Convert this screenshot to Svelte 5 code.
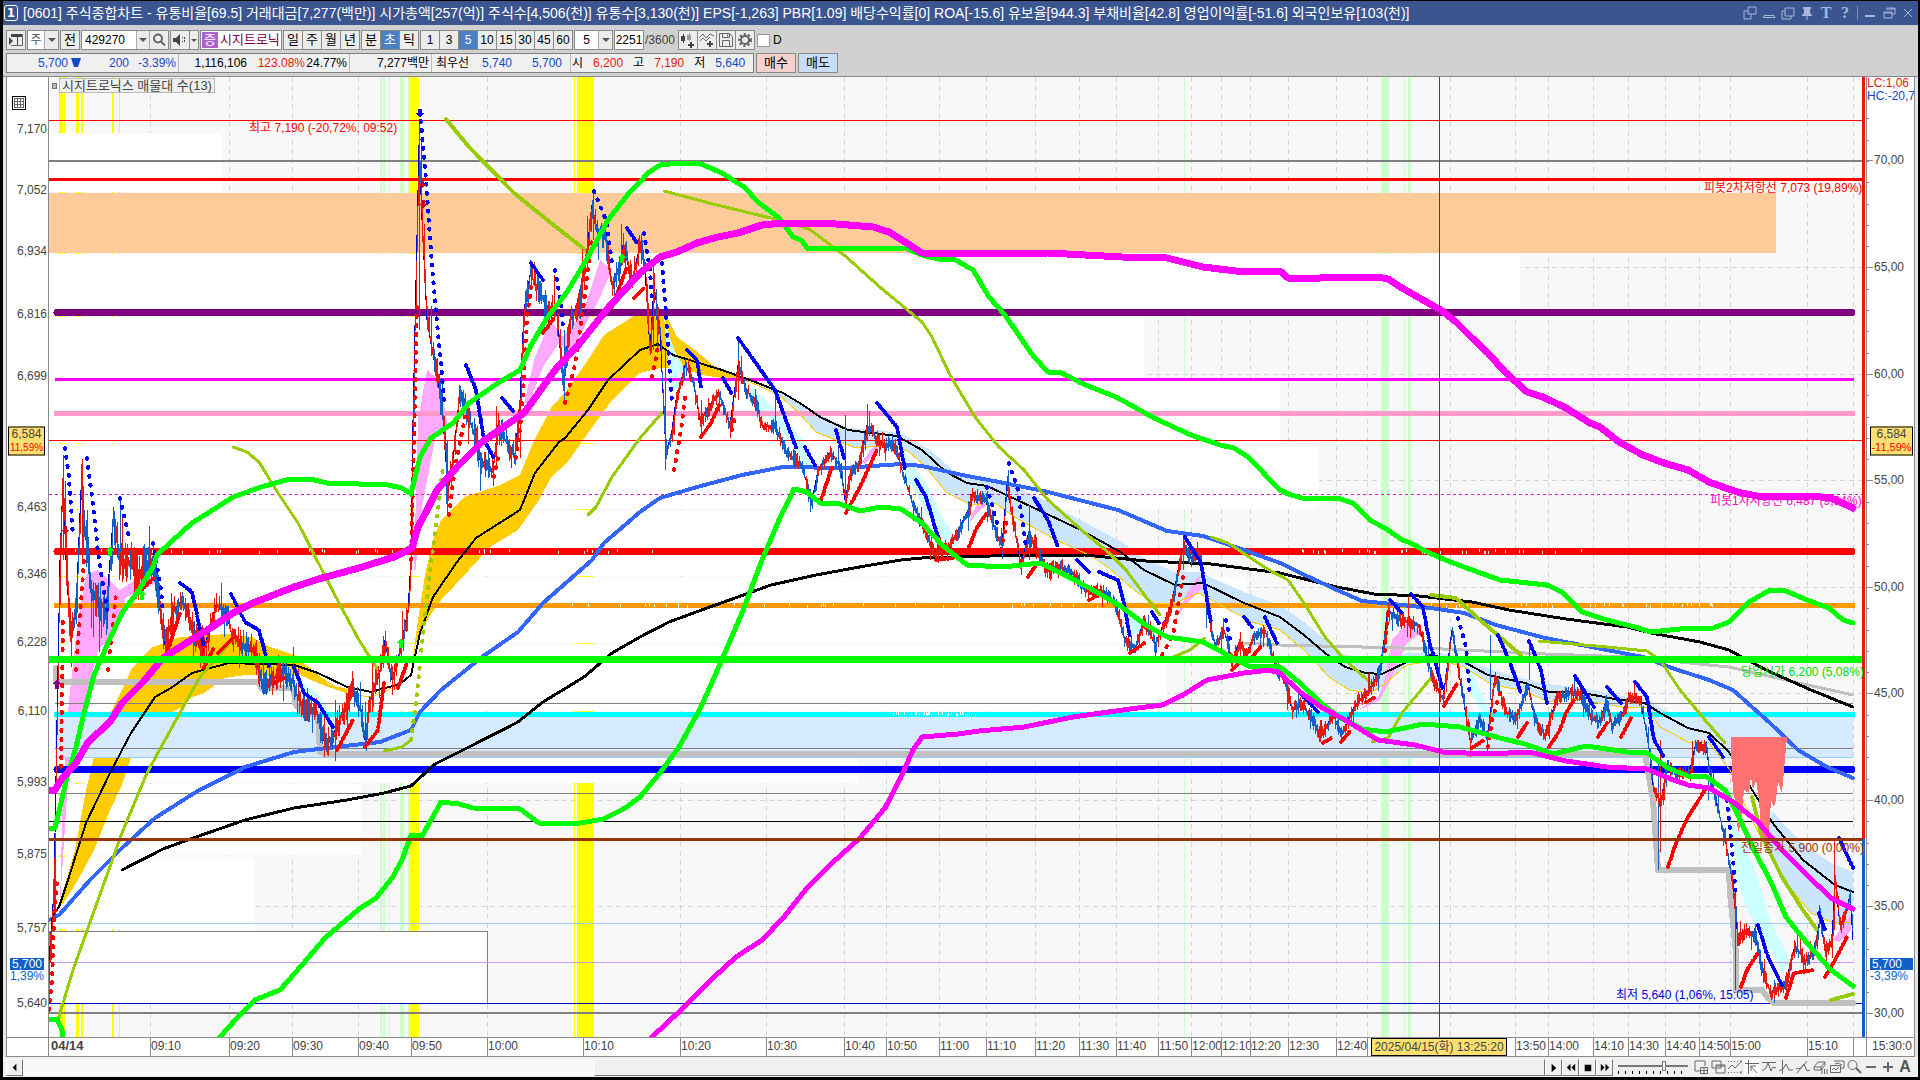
<script>
	// the plot area works in its own units, price grows upwards from 1037 to 77
	const LEFT = 49;
	const TOP = 77;
	const WIDTH = 1817;
	const HEIGHT = 960;

	const px = (x) => ((x - LEFT) / WIDTH) * 100;
	const py = (y) => ((y - TOP) / HEIGHT) * 100;

	const info = '[0601] 주식종합차트 - 유통비율[69.5] 거래대금[7,277(백만)] 시가총액[257(억)] 주식수[4,506(천)] 유통수[3,130(천)] EPS[-1,263] PBR[1.09] 배당수익률[0] ROA[-15.6] 유보율[944.3] 부채비율[42.8] 영업이익률[-51.6] 외국인보유[103(천)]';

	const periods = ['일', '주', '월', '년'];
	const units = ['분', '초', '틱'];
	const steps = ['1', '3', '5', '10', '15', '30', '45', '60'];

	const times = [
		[150, '09:10'], [229, '09:20'], [292, '09:30'], [358, '09:40'], [411, '09:50'], [487, '10:00'],
		[583, '10:10'], [680, '10:20'], [766, '10:30'], [844, '10:40'], [886, '10:50'], [939, '11:00'],
		[986, '11:10'], [1035, '11:20'], [1079, '11:30'], [1116, '11:40'], [1158, '11:50'], [1191, '12:00'],
		[1221, '12:10'], [1250, '12:20'], [1288, '12:30'], [1336, '12:40'], [1367, ''], [1409, ''],
		[1450, ''], [1515, '13:50'], [1548, '14:00'], [1593, '14:10'], [1628, '14:30'], [1665, '14:40'],
		[1699, '14:50'], [1730, '15:00'], [1807, '15:10'], [1853, '']
	];

	const prices = [
		[129, '7,170'], [190, '7,052'], [251, '6,934'], [314, '6,816'], [376, '6,699'], [507, '6,463'],
		[574, '6,346'], [642, '6,228'], [711, '6,110'], [782, '5,993'], [854, '5,875'], [928, '5,757'], [1003, '5,640']
	];

	const levels = [
		[160, '70,00'], [267, '65,00'], [374, '60,00'], [480, '55,00'], [587, '50,00'],
		[693, '45,00'], [800, '40,00'], [906, '35,00'], [1013, '30,00']
	];
	const minorTicks = Array.from({ length: 45 }, (_, i) => 97 + i * 21.3).filter((y) => y < 1034);

	// x, width, color
	const stripes = [
		[59, 4, '#ff0'], [64, 1, '#ff0'], [76, 3, '#ff0'], [81, 2, '#ff0'], [112, 2, '#ff0'], [119, 1, '#ff0'],
		[380, 2, '#cfc'], [383, 2, '#cfc'], [389, 1, '#cfc'], [400, 4, '#cfc'], [408, 2, '#cfc'],
		[410, 7, '#ff0'], [418, 1, '#ff0'], [574, 1, '#ff0'], [577, 4, '#ff0'], [582, 12, '#ff0'],
		[1184, 1, '#cfc'], [1381, 8, '#cfc'], [1404, 1, '#cfc'], [1408, 3, '#cfc']
	];

	// volume profile rows: top, bottom, right end
	const volumes = [
		[133, 192, 222], [254, 316, 1520], [317, 379, 1144], [380, 443, 1280], [444, 509, 1319],
		[510, 576, 1009], [577, 643, 1247], [644, 711, 1167], [712, 783, 858], [784, 855, 361], [857, 929, 255]
	];

	// y, thickness, color, x1, x2
	const hlines = [
		[120.5, 1, '#f00', 49, 1862], [161, 2, '#808080', 49, 1862], [179.5, 3, '#f00', 49, 1862],
		[312.5, 7, '#800080', 57, 1852, 'round'], [379.5, 3, '#f0f', 55, 1854], [413.5, 5, '#f9c', 54, 1855],
		[440.5, 1, '#f00', 49, 1862], [551.5, 7, '#f00', 57, 1852, 'round'], [605.5, 5, '#f90', 54, 1855],
		[703.5, 1, '#808080', 55, 1853], [714.5, 5, '#0ff', 54, 1855], [748.5, 1, '#808080', 55, 1853],
		[757.5, 1, '#9cf', 55, 1853], [769.5, 7, '#00f', 57, 1852, 'round'], [793.5, 1, '#808080', 49, 1853],
		[821.5, 1, '#000', 49, 1853], [923.5, 1, '#9cf', 49, 1853], [962.5, 1, '#c9f', 49, 1853],
		[1003.5, 1, '#00c', 49, 1862], [1013, 2, '#808080', 49, 1862]
	];

	const clouds = [
		['#fc0', '59,905 75,850 86,790 98,740 112,710 122,690 131,670 151,648 180,637 210,635 229,634 252,637 270,647 294,655 310,668 330,685 347,689 347,693 325,686 300,675 270,676 245,675 225,678 204,693 192,697 180,708 163,717 145,735 131,757 122,785 110,810 94,850 78,880 62,905'],
		['#fc0', '411,672 418,620 425,575 433,540 441,520 465,497 500,485 520,475 533,443 551,408 567,390 588,360 604,335 640,312 657,307 667,317 677,337 695,350 713,365 734,375 750,382 722,378 701,375 681,367 660,368 640,373 612,400 588,433 567,463 551,477 539,500 518,530 490,547 469,570 441,600 429,617 416,643 411,677'],
		['#cce5ff', '750,380 783,392 820,415 848,428 881,430 905,435 930,450 955,472 970,477 1010,485 1040,498 1080,520 1122,542 1146,560 1175,572 1199,572 1244,592 1280,605 1304,622 1329,643 1345,655 1366,657 1382,662 1407,653 1435,652 1460,657 1492,670 1541,683 1582,688 1627,697 1647,698 1660,708 1688,720 1725,727 1725,765 1709,743 1688,742 1660,727 1647,707 1627,708 1598,703 1570,698 1549,702 1521,690 1492,685 1464,667 1439,660 1407,665 1386,683 1370,693 1349,690 1329,677 1304,650 1280,630 1252,622 1224,607 1199,593 1175,603 1154,603 1134,590 1109,568 1089,555 1056,540 1016,518 995,503 971,505 946,492 926,467 909,452 893,445 856,448 836,440 816,432 799,413 779,395 754,383'],
		['#cce5ff', '1772,810 1786,827 1807,847 1831,863 1853,872 1853,922 1831,922 1811,913 1786,883 1766,847'],
		['#cff', '1731,817 1741,837 1756,873 1770,920 1790,960 1782,973 1766,943 1749,913 1737,883'],
		['#cff', '901,447 926,483 942,517 960,543 950,550 926,513 905,473'],
		['#cff', '664,317 673,347 685,370 681,390 671,387'],
		['#cff', '750,385 783,417 803,440 816,467 807,467 779,427 750,403'],
		['#cff', '294,667 305,684 320,696 333,718 327,722 312,700 298,690'],
		['#cff', '1124,590 1134,620 1150,625 1132,635 1121,606'],
		['#cff', '1466,655 1480,690 1490,712 1484,716 1470,690'],
		['#faf', '63,790 69,700 78,620 86,575 98,570 120,590 150,570 156,583 125,598 110,640 98,650 88,690 78,740 68,780 60,905'],
		['#faf', '414,570 418,420 427,370 439,380 449,430 437,430 429,470 418,530 416,570'],
		['#faf', '524,403 535,357 551,320 563,337 584,310 600,260 612,270 600,297 571,353 559,343 543,367 529,403'],
		['#faf', '862,462 872,448 880,440 874,455 864,464'],
		['#faf', '971,515 980,500 987,505 978,512 970,522'],
		['#faf', '1175,620 1187,593 1199,575 1203,587 1187,603'],
		['#faf', '1358,710 1378,697 1384,683 1392,640 1407,623 1423,632 1407,643 1394,673 1380,700 1366,707'],
		['#faf', '1833,940 1843,925 1851,915 1851,930 1840,942']
	];

	const salmon = '1731,737 1787,737 1784,770 1782,793 1778,782 1776,800 1774,807 1771,800 1768,850 1764,838 1761,833 1759,800 1756,780 1753,790 1751,776 1749,793 1744,790 1741,825 1738,832 1735,800 1733,793 1731,747';

	// color, thickness, points, dash
	const curves = [
		['#c0c0c0', 6, '56,668 56,682 259,682 261,688 294,688 295,703 302,713 318,715 320,752 325,754 1645,754 1653,800 1658,870 1729,870 1730,893 1736,953 1736,990 1762,990 1768,998 1774,1003 1853,1003'],
		['#c0c0c0', 3, '1244,643 1280,645 1443,649 1545,654 1631,657 1729,667 1790,681 1853,695'],
		['#fc0', 1, '294,657 318,676 347,694 371,697 400,685 411,674'],
		['#fc0', 1, '750,382 779,395 799,413 816,432 836,440 856,448 893,445 909,452 926,467 946,492 971,505 995,503 1016,518 1056,540 1089,555 1109,568 1134,590 1154,603 1175,603 1199,593 1224,607 1252,622 1280,630 1304,650 1329,677 1349,690 1370,693 1386,683 1407,665 1439,660 1464,667 1492,685 1521,690 1549,702 1570,698 1598,703 1627,708 1647,707 1660,727 1688,742 1709,743 1730,770 1748,812 1766,847 1786,883 1811,913 1831,922 1853,922'],
		['#000', 2, '53,915 59,907 69,877 86,823 110,773 131,733 155,697 171,688 192,673 229,663 294,665 318,673 347,687 371,692 400,684 411,675 420,633 433,597 457,562 476,538 520,510 535,473 559,442 565,438 588,410 608,380 640,350 658,344 673,355 722,370 750,380 783,393 803,405 820,417 848,430 897,436 922,450 946,472 967,483 987,486 1032,507 1081,530 1122,553 1144,570 1175,585 1203,583 1244,603 1280,617 1304,635 1325,653 1345,667 1366,673 1382,674 1407,662 1431,655 1464,662 1488,675 1525,683 1549,692 1578,692 1615,699 1645,703 1660,713 1688,728 1709,733 1729,752 1754,793 1774,825 1803,860 1835,885 1853,892'],
		['#000', 3, '122,870 163,849 196,837 245,820 294,808 347,800 384,793 411,786 435,764 469,747 518,722 543,702 584,677 612,653 640,637 669,622 707,608 738,597 771,585 816,575 865,566 901,560 922,558 991,556 1085,555 1146,561 1211,564 1280,573 1337,587 1374,594 1419,596 1472,602 1509,610 1566,619 1627,627 1651,633 1700,642 1729,650 1766,670 1811,690 1853,707'],
		['#36f', 4, '49,920 59,915 90,880 122,848 155,818 196,792 245,767 294,752 327,748 380,742 411,730 420,712 441,690 482,657 518,632 543,603 592,560 604,543 640,512 660,498 697,487 742,475 783,467 844,468 901,464 922,466 967,476 999,482 1048,492 1118,510 1167,531 1203,536 1244,550 1280,563 1309,577 1337,590 1362,601 1431,608 1464,613 1496,625 1545,638 1607,650 1643,657 1672,668 1709,680 1733,690 1770,723 1798,750 1827,767 1853,778'],
		['#9c0', 3, '57,1023 73,970 98,900 122,833 147,773 176,720 200,677 231,642'],
		['#9c0', 3, '233,447 247,452 259,462 278,493 298,523 322,570 339,603 359,640 378,670'],
		['#9c0', 3, '384,751 402,747 411,740'],
		['#9c0', 4, '411,740 416,703 422,643 429,580 437,517 443,467', '1 8'],
		['#9c0', 4, '446,119 469,147 514,193 551,223 588,252'],
		['#9c0', 3, '588,515 596,507 612,477 640,438 662,413'],
		['#9c0', 3, '664,191 713,204 779,220 809,229 844,255 881,288 922,322 932,337 950,375 975,417 999,447 1024,470 1048,500 1085,533 1109,553 1126,570 1146,597 1160,615'],
		['#9c0', 3, '1173,657 1190,650 1205,638'],
		['#9c0', 3, '1211,537 1228,543 1269,570 1288,580 1304,603 1325,637 1345,660 1372,684'],
		['#9c0', 3, '1372,742 1388,738 1402,713 1431,678'],
		['#9c0', 4, '1431,595 1456,598 1480,620 1521,655'],
		['#9c0', 3, '1539,641 1607,647 1647,651 1660,660 1680,690 1705,720 1725,743'],
		['#9c0', 4, '1752,797 1762,837 1782,877 1803,910 1817,930'],
		['#9c0', 4, '1831,1000 1853,994']
	];

	// bands are drawn over the price ticks
	const bands = [
		['#0f0', 5, '49,828 55,828 61,803 67,777 76,747 84,713 94,675 108,643 122,613 139,590 153,567 157,555 171,542 192,523 208,513 233,497 261,487 290,479 310,479 327,483 359,484 388,485 402,488 411,494 420,457 431,438 453,423 469,403 498,383 520,370 531,345 547,318 567,292 588,257 608,220 629,193 640,182 648,173 660,165 680,163 701,164 722,173 744,187 758,202 779,218 793,237 801,240 808,249 905,248 922,255 938,259 954,259 973,270 989,297 1005,315 1020,337 1034,357 1048,372 1062,373 1081,383 1118,398 1154,418 1191,435 1220,445 1234,448 1248,457 1280,490 1288,494 1302,498 1337,498 1353,503 1370,520 1388,530 1402,540 1411,543 1423,550 1443,559 1464,567 1500,580 1547,585 1562,592 1582,612 1607,620 1635,627 1651,632 1680,629 1713,628 1729,622 1749,602 1770,590 1786,591 1807,600 1829,608 1843,620 1853,623'],
		['#0f0', 5, '49,1020 57,1019 62,1030 62,1040'],
		['#0f0', 5, '220,1037 237,1018 255,1000 280,990 302,965 325,938 359,909 376,898 392,878 402,860 411,835 422,836 431,820 441,802 459,804 473,808 520,809 539,823 580,823 604,819 625,808 640,797 660,773 679,747 701,707 724,655 742,613 762,560 779,520 794,489 807,492 820,503 840,504 860,511 881,507 901,509 922,523 942,545 967,565 1003,567 1040,563 1065,575 1093,590 1122,607 1146,625 1167,637 1203,642 1224,653 1248,666 1280,667 1300,683 1321,703 1341,718 1362,729 1386,732 1423,724 1460,727 1500,738 1525,744 1553,754 1586,746 1627,752 1647,753 1668,768 1688,776 1707,777 1725,790 1737,813 1754,850 1770,880 1786,917 1807,943 1831,970 1853,986'],
		['#f0f', 5, '652,1037 681,1010 713,978 736,957 762,940 783,918 807,888 832,863 860,838 885,808 901,777 913,750 922,737 958,734 979,731 1024,727 1073,717 1130,709 1162,705 1183,695 1207,680 1244,673 1269,670 1280,673 1300,692 1321,707 1345,720 1378,740 1415,745 1443,752 1488,754 1529,752 1566,761 1607,767 1647,769 1668,778 1688,785 1709,788 1733,802 1758,822 1782,850 1807,875 1831,898 1853,909'],
		['#f0f', 7, '49,790 55,790 61,780 76,763 88,742 110,722 122,703 143,682 163,658 188,642 212,627 233,613 253,603 294,587 322,578 359,568 394,557 412,548 418,527 427,510 437,490 457,467 482,442 502,428 524,413 535,398 555,370 580,343 608,308 629,285 640,273 660,257 677,252 697,243 718,237 738,233 762,225 783,223 836,224 873,227 889,232 905,242 922,253 967,254 1048,253 1122,257 1167,258 1203,267 1236,271 1280,271 1288,278 1304,279 1337,277 1378,277 1388,279 1402,288 1423,300 1441,310 1456,322 1472,338 1488,353 1505,372 1527,392 1543,397 1566,408 1590,423 1600,427 1619,442 1643,455 1664,463 1688,470 1709,482 1737,492 1762,497 1811,496 1831,498 1853,508']
	];

	// parabolic dots
	const sarDown = [
		'65,448 69,477 73,537', '87,458 94,513 98,553 107,610', '120,498 129,537', '153,543 161,590 163,613',
		'180,583 192,592 204,647', '231,594 245,622 259,630 269,667', '294,667 304,693 318,703 333,727',
		'420,112 425,167 429,223 433,277 437,323 441,363 444,400', '466,365 476,390 484,440 494,458', '502,398 514,412',
		'531,263 543,280', '555,270 561,303 563,330', '594,191 606,220 612,263', '627,228 637,243', '644,233 650,270 652,303',
		'662,263 665,300 672,403', '687,350 697,360 701,387', '723,378 732,394', '738,338 775,390 797,450', '805,447 816,467', '836,430 844,458',
		'877,403 897,427 905,470', '916,480 926,497 938,537', '987,487 999,530', '1009,463 1018,490 1026,547',
		'1034,498 1048,520 1058,547', '1077,560 1089,572', '1099,572 1118,580 1124,603 1130,638', '1152,612 1160,625', '1185,537 1201,563 1211,623',
		'1226,620 1230,640', '1244,617 1252,627', '1265,617 1277,643', '1301,694 1318,712', '1390,600 1402,613', '1411,594 1423,607 1429,640 1443,690', '1458,618 1466,647 1470,697',
		'1498,635 1509,660 1521,693', '1529,641 1541,670 1547,703', '1575,676 1594,707', '1607,687 1621,703',
		'1635,682 1647,697 1654,740 1664,757', '1709,737 1723,757', '1727,800 1733,860 1736,897', '1758,925 1768,957 1782,985',
		'1819,913 1825,930', '1839,838 1853,868'
	];
	const sarUp = [
		'49,1010 52,980 54,920 57,880', '61,767 63,620', '76,670 84,560', '108,670 116,593', '141,590 155,577', '167,653 180,613', '204,668 214,647', '218,653 233,638',
		'273,684 284,678', '337,750 353,720', '365,747 378,730 384,683', '398,688 408,660', '411,560 414,440 417,300', '449,515 455,467 465,417',
		'494,477 498,457', '516,458 522,413 527,320 531,287', '543,333 555,317', '565,403 574,370 584,303 592,237',
		'612,307 627,267', '634,298 644,288', '652,377 658,347', '674,470 681,430 685,397', '701,437 711,423 720,403', '732,430 736,413',
		'820,503 832,467', '846,513 860,487 877,450', '936,560 954,558', '969,547 977,527 987,513', '1001,550 1007,520',
		'1028,577 1036,565', '1089,600 1103,593', '1130,653 1146,642', '1162,655 1173,635 1183,577', '1232,670 1240,662',
		'1252,657 1262,645', '1323,743 1333,737', '1341,742 1351,730', '1366,702 1376,697', '1384,660 1388,610', '1444,706 1458,682', '1472,748 1484,740',
		'1488,747 1492,720 1500,693', '1518,737 1527,723', '1549,747 1560,730 1566,713 1574,700', '1598,737 1607,723',
		'1621,737 1631,718', '1668,867 1676,843 1688,817 1705,790', '1741,987 1747,970 1758,953',
		'1786,998 1794,973 1815,970', '1825,977 1835,960 1847,937'
	];

	// the dots stand apart where the price moves fast
	function dotGap(points) {
		const list = points.split(' ').map((p) => p.split(',').map(Number));
		const [x1, y1] = list[0];
		const [x2, y2] = list[list.length - 1];
		return Math.abs((y2 - y1) / (x2 - x1)) > 3.5 ? '1 8' : '1 3';
	}

	const pricePath = '49,960 54,890 57,720 60,560 63,480 66,560 70,630 76,610 81,490 86,540 92,590 100,600 106,615 110,560 113,520 120,560 130,560 138,580 145,560 155,565 160,610 165,645 174,610 182,600 192,625 202,655 212,620 216,605 225,610 232,635 245,645 255,650 261,680 268,682 284,670 292,680 300,703 316,710 325,745 333,735 343,710 353,692 361,710 365,740 370,700 380,670 385,640 392,680 400,650 408,610 411,560 413,420 416,280 419,145 422,220 427,320 432,350 438,380 443,420 448,490 453,460 460,390 467,410 473,430 480,460 493,470 498,425 505,440 515,455 520,400 524,310 530,275 540,290 547,310 556,305 563,380 570,320 580,300 586,260 592,205 597,230 605,235 612,285 618,270 623,245 632,280 640,245 645,270 650,350 654,285 660,330 666,455 672,430 676,400 685,365 693,380 700,420 710,405 718,392 730,425 738,365 746,390 755,400 762,425 775,425 785,450 797,460 803,470 812,500 818,470 830,452 840,465 845,500 850,475 860,460 867,425 880,442 895,447 905,480 915,510 925,530 935,552 950,545 958,530 968,510 972,494 985,498 995,530 1002,545 1007,485 1013,520 1021,565 1028,535 1035,542 1045,570 1060,565 1075,575 1085,590 1100,590 1115,602 1125,640 1135,648 1144,620 1155,645 1165,620 1172,602 1180,560 1184,545 1192,560 1200,555 1207,610 1215,645 1224,630 1232,660 1240,640 1245,655 1255,635 1265,630 1275,665 1285,680 1292,710 1300,702 1310,715 1320,735 1333,715 1342,732 1355,705 1370,688 1380,670 1388,610 1400,620 1410,620 1420,627 1427,660 1435,685 1443,698 1452,630 1460,680 1470,740 1480,718 1487,740 1495,675 1505,710 1515,720 1528,685 1535,720 1545,735 1557,697 1570,692 1580,692 1590,715 1600,722 1606,700 1612,725 1622,715 1628,698 1640,698 1648,740 1653,785 1659,800 1662,795 1667,765 1680,773 1690,770 1695,747 1706,747 1712,785 1725,838 1733,885 1738,940 1745,930 1755,935 1762,970 1770,992 1785,985 1795,945 1805,960 1815,950 1820,918 1825,950 1832,940 1835,880 1840,925 1845,915 1850,895 1853,940';

	// single long wicks
	const wicksUp = 'M419.5 119V330M63.500 455V560M82.500 459V560M593.500 192V240M867.500 404V440M845.500 415V500M1183.500 535V570M1408.500 596V625M1529.500 642V680M1660.500 740V852M1834.500 840V930M1029.500 505V560M738.500 360V400M653.500 260V350';
	const wicksDown = 'M447.500 440V513M665.500 350V470M701.500 400V437M775.500 390V430M564.500 330V404M1490.500 635V700M1658.500 760V870M1708.500 780V800M1735.500 890V990M1774.500 980V1003M738.500 338V395M120.500 500V570M1008.500 470V500';

	// small seeded generator so that the ticks are the same on every load
	let seed = 42;
	function random() {
		seed = (seed * 16807) % 2147483647;
		return seed / 2147483647;
	}

	function buildTicks() {
		const points = pricePath.split(' ').map((p) => p.split(',').map(Number));
		let up = '';
		let down = '';
		let rising = true;
		for (let i = 1; i < points.length; i++) {
			const [x1, y1] = points[i - 1];
			const [x2, y2] = points[i];
			for (let x = x1; x < x2; x++) {
				const y = y1 + ((y2 - y1) * (x - x1)) / (x2 - x1);
				const slope = Math.abs((y2 - y1) / (x2 - x1));
				const range = (x < 160 ? 28 : x < 660 ? 18 : 9) + Math.min(slope, 30) * 0.6;
				const top = Math.round(y - range * random() * (random() > 0.9 ? 1.8 : 0.8));
				const bottom = Math.round(y + range * random() * (random() > 0.9 ? 1.8 : 0.8)) + 2;
				const line = `M${x + 0.5} ${top}V${bottom}`;
				// colors come in short runs
				if (random() > 0.6) rising = random() > (y2 > y1 ? 0.55 : 0.3);
				if (rising) up += line;
				else down += line;
			}
		}
		return { up: up + wicksUp, down: down + wicksDown };
	}

	function buildSpecks() {
		const rows = [[549, 554, 620, 54], [603, 608, 560, 560], [603, 608, 400, 1350], [712, 717, 90, 890], [549, 554, 300, 1300]];
		let d = '';
		for (const [top, bottom, span, start] of rows) {
			for (let i = 0; i < 34; i++) {
				const x = Math.floor(start + random() * span) + 0.5;
				const y = top + Math.floor(random() * 3);
				d += `M${x} ${y}V${Math.min(bottom, y + 3)}`;
			}
		}
		return d;
	}

	const ticks = buildTicks();
	const specks = buildSpecks();

	const notes = [
		[249, 128, '#f00', '최고 7,190 (-20,72%, 09:52)'],
		[1704, 188, '#f00', '피봇2차저항선 7,073 (19,89%)'],
		[1710, 501, '#f0c', '피봇1차저항선 6,487 (9,94%)'],
		[1741, 672, '#0d0', '당일시가 6,200 (5,08%)'],
		[1741, 848, '#930', '전일종가 5,900 (0,00%)'],
		[1616, 995, '#00d', '최저 5,640 (1,06%, 15:05)']
	];
</script>

<main>
	<header>
		<span class="number">1</span>
		<h1>{info}</h1>
		<div class="window-tools">
			<button aria-label="화면 복사"><svg viewBox="0 0 14 14"><path d="M5 1h8v7h-8zM5 5H1v8h7V8" /></svg></button>
			<button aria-label="내리기"><svg viewBox="0 0 14 14"><path d="M2 9.500h10l1 2H1z" /></svg></button>
			<button aria-label="겹치기"><svg viewBox="0 0 14 14"><path d="M4 2h9v8H4zM4 5H1v8h9v-3" /></svg></button>
			<button aria-label="고정"><svg viewBox="0 0 14 14"><path class="solid" d="M3 1h8v2h-1v4l2 2v1H7.500v4h-1v-4H2V9l2-2V3H3z" /></svg></button>
			<button class="letter">T</button>
			<button class="letter help">?</button>
			<i></i>
			<button aria-label="최소화"><svg viewBox="0 0 14 14"><path class="solid" d="M2 9h10v2H2z" /></svg></button>
			<button aria-label="이전 크기"><svg viewBox="0 0 14 14"><path d="M5 4V2h8v6h-3M5 3h8M2 6h8v6H2zM2 7h8" /></svg></button>
			<button aria-label="닫기"><svg viewBox="0 0 14 14"><path d="M3 3l8 8M11 3l-8 8" /></svg></button>
		</div>
	</header>

	<div class="toolbar">
		<div class="row">
			<div class="group"><button class="cell" aria-label="목록"><svg class="icon" viewBox="0 0 16 16"><path class="line" d="M3 2.500h11.500v11H3" /><path class="dark" d="M3 2h11v3H3zM1 5l4 4-4 4zM9 5h1v8H9z" /></svg></button></div>
			<div class="group">
				<select class="kind" aria-label="구분"><option>주</option></select>
				<span class="arrow"></span>
			</div>
			<div class="group"><button class="cell hangul">전</button></div>
			<div class="group">
				<input class="code" aria-label="종목코드" value="429270" />
				<span class="arrow"></span>
				<button class="cell" aria-label="종목검색"><svg class="icon" viewBox="0 0 16 16"><circle class="gray" cx="7" cy="6.500" r="4" /><path class="gray" d="M10 9.500l4 4" /></svg></button>
			</div>
			<div class="group">
				<button class="cell" aria-label="소리"><svg class="icon" viewBox="0 0 16 16"><path class="dark" d="M1 6h3l4-4v12L4 10H1zM10 5h1v1h-1zM10 9h1v1h-1zM12 5h1v2h-1zM12 8h1v2h-1z" /></svg></button>
				<span class="arrow small"></span>
			</div>
			<div class="group name hangul"><b>증</b><span>시지트로닉</span></div>
			<div class="group hangul">
				{#each periods as period}<button class="cell">{period}</button>{/each}
			</div>
			<div class="group hangul">
				{#each units as unit}<button class="cell" class:on={unit === '초'}>{unit}</button>{/each}
			</div>
			<div class="group">
				{#each steps as step}<button class="cell" class:on={step === '5'}>{step}</button>{/each}
			</div>
			<div class="group">
				<select class="step" aria-label="주기"><option>5</option></select>
				<span class="arrow"></span>
			</div>
			<div class="group"><input class="count" aria-label="봉 개수" value="2251" /></div>
			<span class="total">/3600</span>
			<div class="group">
				<button class="cell" aria-label="봉 추가"><svg class="icon" viewBox="0 0 16 16"><path class="dark" d="M1 4h4v5H1zM3 2h1v9H3zM10 10h2v2h2v2h-2v2h-2v-2H8v-2h2z" /><path class="mid" d="M7 3h4v5H7zM9 1h1v8H9z" /></svg></button>
				<button class="cell" aria-label="지표 추가"><svg class="icon" viewBox="0 0 16 16"><path class="line" d="M0 6l4-4 3 4 4-4 4 2M1 9l3-3 3 3 4-4" /><path class="dark" d="M10 9h2v2h2v2h-2v2h-2v-2H8v-2h2z" /></svg></button>
				<button class="cell" aria-label="저장"><svg class="icon" viewBox="0 0 16 16"><path class="line" d="M1.500 1.500h10l3 3v10h-13zM4.500 1.500v4h7v-4M4.500 14.500v-6h7v6M9.500 2.500v2" /></svg></button>
				<button class="cell" aria-label="설정"><svg class="icon" viewBox="0 0 16 16"><circle class="gear" cx="8" cy="8" r="5.500" /><circle class="gray" cx="8" cy="8" r="4" /></svg></button>
			</div>
			<label class="check"><input type="checkbox" />D</label>
		</div>

		<div class="row">
			<div class="quote">
				<div class="blue"><span class="w1">5,700<svg class="fall" viewBox="0 0 10 9"><path d="M0 0h10L7 9H3z" /></svg></span><span class="w2">200</span><span class="w3">-3.39%</span></div>
				<div><span class="w4">1,116,106</span><span class="w5 red">123.08%</span><span class="w6">24.77%</span></div>
				<div><span class="w7">7,277백만</span></div>
				<div><span class="w8">최우선</span><span class="w9 blue">5,740</span><span class="w10 blue">5,700</span></div>
				<div class="ohl"><span>시</span><span class="red">6,200</span><span>고</span><span class="red">7,190</span><span>저</span><span class="blue">5,640</span></div>
			</div>
			<button class="order buy hangul">매수</button>
			<button class="order sell hangul">매도</button>
		</div>
	</div>

	<div class="chart">
		<div class="axis left">
			<button class="table-icon" aria-label="표 보기"><svg viewBox="0 0 10 10"><path d="M0 .5h10M0 3.500h10M0 6.500h10M0 9.500h10M.5 0v10M3.500 0v10M6.500 0v10M9.500 0v10" /></svg></button>
			{#each prices as [y, text]}
				<span style="top: {py(y)}%">{text}</span>
			{/each}
			<div class="cursor" style="top: {py(440.5)}%">6,584<em>11,59%</em></div>
			<div class="current" style="top: {py(970)}%"><b>5,700</b>1,39%</div>
		</div>

		<div class="plot">
			<svg viewBox="{LEFT} {TOP} {WIDTH} {HEIGHT}" preserveAspectRatio="none" role="img" aria-label="시지트로닉스 주가 차트">
				<g class="grid">
					{#each times as [x]}<line x1={x + 0.5} x2={x + 0.5} y1="77" y2="1037" />{/each}
					{#each levels as [y]}<line x1="49" x2="1862" y1={y + 0.5} y2={y + 0.5} />{/each}
				</g>
				{#each stripes as [x, width, color]}<rect {x} y="77" {width} height="960" fill={color} />{/each}
				{#each volumes as [top, bottom, end]}<rect x="49" y={top} width={end - 49} height={bottom - top} fill="#fff" />{/each}
				<rect x="49" y="193" width="1727" height="60" fill="#fc9" />
				<rect x="49.500" y="931.500" width="438" height="72" fill="#fff" stroke="#808080" />

				{#each clouds as [color, points]}<polygon {points} fill={color} />{/each}
				<rect x="55" y="717" width="1798" height="40" fill="#d6eaff" />

				{#each hlines as [y, size, color, x1, x2, cap]}
					<line {x1} {x2} y1={y} y2={y} stroke={color} stroke-width={size} stroke-linecap={cap} />
				{/each}
				<line x1="49" x2="1862" y1="494.500" y2="494.500" stroke="#f0c" stroke-dasharray="3 3" />
				<path d={specks} stroke="#fff" />

				{#each curves as [color, size, points, dash]}
					<polyline {points} stroke={color} stroke-width={size} stroke-dasharray={dash} />
				{/each}
				<polyline points={pricePath} stroke="#00c" />
				<path d={ticks.down} stroke="#1060c8" />
				<path d={ticks.up} stroke="#e8180c" />
				{#each sarDown as points}<polyline class="dots" {points} stroke="#00f" stroke-dasharray={dotGap(points)} />{/each}
				{#each sarUp as points}<polyline class="dots" {points} stroke="#f00" stroke-dasharray={dotGap(points)} />{/each}
				<polygon points={salmon} fill="#ff7070" />
				{#each bands as [color, size, points]}
					<polyline {points} stroke={color} stroke-width={size} />
				{/each}

				<line x1="49" x2="1862" y1="659.500" y2="659.500" stroke="#0f0" stroke-width="7" />
				<line x1="49" x2="1862" y1="839.500" y2="839.500" stroke="#930" stroke-width="3" />
				<path d="M418 109h4v4h2l-4 5-4-5h2z" fill="#00f" />
				<path d="M421 180h3v4h2l-4 5-3-5h2zM422 200h3v4h2l-4 5-3-5h2zM64 526h3v4h2l-4 5-3-5h2z" fill="#d0021b" />
				<path d="M110 546l4 5h-2v5h-4v-5h-2zM142 590l4 5h-2v5h-4v-5h-2zM401 638l4 5h-2v5h-4v-5h-2zM622 253l4 5h-2v5h-4v-5h-2z" fill="#0f0" />
				<path d="M57 679l4 5h-2v5h-4v-5h-2z" fill="#800080" />
				<line x1="1439.500" x2="1439.500" y1="77" y2="1037" stroke="#e00000" />
				<rect x="1862" y="77" width="3" height="763" fill="#e8180c" />
				<rect x="1862" y="839" width="3" height="198" fill="#1060c8" />
				<rect x="1865" y="77" width="1" height="960" fill="#fff" />
			</svg>
			<div class="legend"><i></i><span>시지트로닉스 매물대 수(13)</span></div>
			<div class="notes">
				{#each notes as [x, y, color, text]}
					<span style="left: {px(x)}%; top: {py(y)}%; color: {color}">{text}</span>
				{/each}
			</div>
		</div>

		<div class="axis right">
			<p class="red">LC:1,06</p>
			<p class="blue">HC:-20,7</p>
			{#each minorTicks as y}<i style="top: {py(y)}%"></i>{/each}
			{#each levels as [y, text]}
				<span style="top: {py(y)}%">{text}</span>
			{/each}
			<div class="cursor" style="top: {py(440.5)}%">6,584<em>-11,59%</em></div>
			<div class="current" style="top: {py(970)}%"><b>5,700</b>-3,39%</div>
		</div>

		<div class="corner"></div>
		<div class="times">
			<b>04/14</b>
			{#each times as [x, text]}
				<span style="left: {px(x)}%">{text}</span>
			{/each}
			<strong style="left: {px(1371)}%">2025/04/15(화) 13:25:20</strong>
		</div>
		<div class="corner end">15:30:0</div>
	</div>

	<footer>
		<button class="raised" aria-label="왼쪽으로"><svg viewBox="0 0 14 14"><path d="M9 3v8L5 7z" /></svg></button>
		<div class="track"><div class="thumb"></div></div>
		<button class="raised" aria-label="재생"><svg viewBox="0 0 14 14"><path d="M5 3v9l5-4.500z" /></svg></button>
		<button class="raised" aria-label="빠르게 뒤로"><svg viewBox="0 0 14 14"><path d="M7 3v8L3 7zM12 3v8L8 7z" /></svg></button>
		<button class="raised" aria-label="정지"><svg viewBox="0 0 14 14"><path d="M4 4h7v7H4z" /></svg></button>
		<button class="raised" aria-label="빠르게 앞으로"><svg viewBox="0 0 14 14"><path d="M3 3v8l4-4zM8 3v8l4-4z" /></svg></button>
		<div class="speed"><input type="range" aria-label="속도" min="0" max="9" value="6" /><i></i></div>
		<div class="draw">
			<button aria-label="새 차트"><svg viewBox="0 0 16 16"><path d="M2 2h10v5M2 2v10h5M7.500 8.500h7v6h-7zM11 8.500v6M7.500 11.500h7" /></svg></button>
			<button aria-label="겹쳐 보기"><svg viewBox="0 0 16 16"><path d="M2 2h9v7H2zM6 6h9v8H6z" fill="#f0f0f0" /><path d="M6 7h9" /></svg></button>
			<button aria-label="지표"><svg viewBox="0 0 16 16"><path d="M1 10l4-4 3 3 5-5" /><path d="M1 2.500h14M1 13.500h14" stroke-dasharray="1 2" /><path d="M14 1v3M14 12v3" /></svg></button>
			<button class="pressed" aria-label="십자선"><svg viewBox="0 0 16 16"><path d="M1 4.500h14M4.500 1v14M7 7l6 7M7 7v5M7 7h5" /></svg></button>
			<button aria-label="수평선"><svg viewBox="0 0 16 16"><path d="M1 3.500h14M1 12l4-3 2-5 3 8 2-4 3 1" /></svg></button>
			<button aria-label="수직선"><svg viewBox="0 0 16 16"><path d="M4.500 1v14M1 12l4-2 3-5 3 6 4 0" /></svg></button>
			<button aria-label="추세선"><svg viewBox="0 0 16 16"><path d="M2 14L12 2M1 10l5-1 3-4 3 7 3-1" /></svg></button>
			<button aria-label="지우기"><svg viewBox="0 0 16 16"><path d="M2 8l4-5h7l-4 5zM2 8v3h7V8M9 11l4-5V3M10 10v5M12.500 10v5M15 10v5" /></svg></button>
			<button aria-label="차트 그림"><svg viewBox="0 0 16 16"><path d="M5 2h10v7h-3M1.500 6.500h10v7h-10zM3 11l2-2 2 2 3-3M6 5l3-1 4 2" /></svg></button>
			<button aria-label="돋보기"><svg viewBox="0 0 16 16"><circle cx="6.500" cy="6" r="4.500" /><path class="bold" d="M10 9l5 5" /></svg></button>
			<button aria-label="축소"><svg viewBox="0 0 16 16"><path class="bold" d="M3 8h10" /></svg></button>
			<button aria-label="확대"><svg viewBox="0 0 16 16"><path class="bold" d="M3 8h10M8 3v10" /></svg></button>
			<button class="auto">A</button>
		</div>
	</footer>
</main>

<style>
	:global(body) {
		background: #000;
	}

	main {
		box-sizing: border-box;
		display: flex;
		flex-direction: column;
		min-height: 100vh;
		padding: 1px 2px 3px 3px;
		background: #000;
		color: #000;
		font-family: "Liberation Sans", "Noto Sans CJK KR", sans-serif;
		font-size: 12px;
		line-height: 16px;
	}

	button, input, select {
		box-sizing: border-box;
		margin: 0;
		padding: 0;
		border: 0;
		border-radius: 0;
		background: none;
		color: inherit;
		font: inherit;
	}

	select {
		appearance: none;
		text-align: center;
	}

	svg {
		display: block;
	}

	.hangul {
		font-size: 13px;
	}

	.red {
		color: #e8180c;
	}

	.blue {
		color: #1048c8;
	}

	header {
		display: flex;
		align-items: center;
		height: 24px;
		padding: 0 3px 0 1px;
		background: #3a5590;
		color: #fff;
	}

	.number {
		box-sizing: border-box;
		width: 14px;
		height: 16px;
		border: 1px solid #fff;
		border-radius: 3px;
		font: bold 12px/14px "DejaVu Sans", sans-serif;
		text-align: center;
	}

	h1 {
		flex: 1;
		margin: 0 0 0 5px;
		font-size: 14px;
		font-weight: normal;
		white-space: nowrap;
	}

	.window-tools {
		display: flex;
		align-items: center;
		gap: 5px;
		color: #a9b7d8;
	}

	.window-tools button {
		width: 14px;
		height: 14px;
	}

	.window-tools path {
		fill: none;
		stroke: currentColor;
	}

	.window-tools .solid {
		fill: currentColor;
		stroke: none;
	}

	.window-tools .letter {
		font: bold 16px/14px "Liberation Serif", serif;
	}

	.window-tools i {
		width: 1px;
		height: 14px;
		background: #7f8aa5;
	}

	.toolbar {
		display: flex;
		flex-direction: column;
		gap: 3px;
		padding: 5px 0 3px 3px;
		background: #d1d1d1;
	}

	.row {
		display: flex;
		align-items: center;
		gap: 1px;
		height: 20px;
	}

	.group {
		box-sizing: border-box;
		display: flex;
		flex-shrink: 0;
		height: 20px;
		border: 1px solid #8a8a8a;
		background: #fff;
	}

	.cell {
		width: 19px;
		border-right: 1px solid #8a8a8a;
		background: #ececec;
		text-align: center;
	}

	.cell:last-child {
		width: 18px;
		border-right: 0;
	}

	.cell.on {
		background: #4a80c4;
		color: #fff;
	}

	.icon {
		width: 16px;
		height: 16px;
		margin: 0 auto;
	}

	.line, .gray {
		fill: none;
		stroke: #666;
	}

	.gray {
		stroke-width: 2;
	}

	.gear {
		fill: none;
		stroke: #666;
		stroke-width: 3;
		stroke-dasharray: 2 2;
	}

	.dark {
		fill: #444;
	}

	.mid {
		fill: #999;
	}

	.arrow {
		box-sizing: border-box;
		display: flex;
		align-items: center;
		justify-content: center;
		width: 14px;
		border-left: 1px solid #aaa;
		background: #ececec;
		pointer-events: none;
	}

	.arrow:not(:last-child) {
		border-right: 1px solid #aaa;
	}

	.arrow::before {
		content: "";
		border: 4px solid transparent;
		border-top-color: #555;
		border-bottom: 0;
	}

	.arrow.small {
		width: 8px;
		border-left: 0;
	}

	.arrow.small::before {
		border-width: 3px 3px 0;
	}

	.kind {
		width: 16px;
		color: #555;
	}

	.code {
		width: 54px;
		padding-left: 3px;
	}

	.step {
		width: 23px;
	}

	.count {
		width: 28px;
		text-align: center;
	}

	.total {
		width: 32px;
		color: #444;
	}

	.name {
		width: 82px;
		padding: 1px;
		color: #800040;
		white-space: nowrap;
	}

	.name b {
		width: 16px;
		margin-right: 2px;
		background: #b060d0;
		color: #fff;
		font-weight: normal;
		text-align: center;
	}

	.check {
		display: flex;
		align-items: center;
		gap: 3px;
		padding-left: 1px;
	}

	.check input {
		appearance: none;
		width: 13px;
		height: 13px;
		border: 1px solid #999;
		background: #fff;
	}

	.quote {
		box-sizing: border-box;
		display: flex;
		flex-shrink: 0;
		height: 20px;
		border: 1px solid #808080;
		background: #f0f0f0;
		text-align: right;
	}

	.quote div {
		display: flex;
		align-items: center;
		box-sizing: border-box;
		padding-right: 2px;
		border-right: 1px solid #bbb;
		white-space: nowrap;
	}

	.quote div:last-child {
		border-right: 0;
	}

	.fall {
		display: inline-block;
		width: 10px;
		height: 9px;
		margin-left: 3px;
		fill: #1048c8;
	}

	.w1 { width: 74px; }
	.w2 { width: 48px; }
	.w3 { width: 47px; }
	.w4 { width: 68px; }
	.w5 { width: 58px; }
	.w6 { width: 42px; }
	.w7 { width: 79px; }
	.w8 { width: 37px; }
	.w9 { width: 43px; }
	.w10 { width: 50px; margin-right: 6px; }

	.quote .ohl {
		gap: 10px;
		width: 182px;
		padding-left: 1px;
	}

	.order {
		width: 40px;
		height: 20px;
		margin-left: 1px;
		border: 1px solid #8a8a8a;
		background: #f6d2cc;
	}

	.sell {
		background: #c8def4;
	}

	.chart {
		flex: 1;
		display: grid;
		grid-template-columns: 43px minmax(0, 1fr) 49px;
		grid-template-rows: minmax(0, 1fr) 20px;
		padding: 0 3px;
		border-top: 1px solid #8a8a8a;
		background: #e4e4e4;
		color: #444;
	}

	.axis {
		position: relative;
		overflow: hidden;
		border: solid #8a8a8a;
		border-width: 0 1px;
		background: #fff;
	}

	.axis span {
		position: absolute;
		right: 1px;
		transform: translateY(-50%);
	}

	.axis.right span {
		right: auto;
		left: 7px;
	}

	.axis.right span::before {
		content: "";
		position: absolute;
		top: 8px;
		left: -7px;
		width: 6px;
		height: 1px;
		background: #8a8a8a;
	}

	.axis i {
		position: absolute;
		left: 0;
		width: 2px;
		height: 1px;
		background: #8a8a8a;
	}

	.axis p {
		margin: 0;
		line-height: 13px;
		white-space: nowrap;
	}

	.table-icon {
		position: absolute;
		top: 19px;
		left: 5px;
		width: 14px;
		height: 14px;
		padding: 1px;
		border: 1px solid #000;
	}

	.table-icon path {
		stroke: #666;
	}

	.cursor {
		position: absolute;
		left: 1px;
		right: 3px;
		box-sizing: border-box;
		height: 29px;
		border: 1px solid #000;
		background: #ffdf70;
		line-height: 13px;
		text-align: center;
		white-space: nowrap;
		transform: translateY(-50%);
	}

	.cursor em {
		display: block;
		color: #f00;
		font-size: 11px;
		font-style: normal;
	}

	.left .cursor em {
		font-size: 10px;
	}

	.right .cursor {
		left: 3px;
		right: 1px;
	}

	.current {
		position: absolute;
		left: 3px;
		right: 4px;
		color: #1060c8;
		line-height: 12px;
		transform: translateY(-50%);
	}

	.current b {
		display: block;
		background: #1060c8;
		color: #fff;
		font-weight: normal;
		padding-left: 2px;
	}

	.right .current {
		right: 1px;
	}

	.plot {
		position: relative;
		overflow: hidden;
		background: #f8f8f8;
	}

	.plot svg {
		position: absolute;
		width: 100%;
		height: 100%;
		shape-rendering: crispEdges;
	}

	.plot polyline {
		fill: none;
		stroke-linejoin: round;
		stroke-linecap: round;
	}

	.plot .dots {
		stroke-width: 4;
	}

	.grid line {
		stroke: #d4d4d4;
		stroke-dasharray: 5 4;
	}

	.legend {
		position: absolute;
		top: 1px;
		left: 3px;
		display: flex;
		align-items: center;
		gap: 2px;
		font-size: 13px;
	}

	.legend i {
		width: 3px;
		height: 4px;
		border: 1px solid #777;
		background: #bbb;
	}

	.legend span {
		padding: 0 2px;
		border: 1px solid #bbb;
		background: #f0f0f0;
		line-height: 13px;
	}

	.notes {
		position: absolute;
		inset: 0;
	}

	.notes span {
		position: absolute;
		white-space: nowrap;
		transform: translateY(-50%);
	}

	.corner {
		border: 1px solid #8a8a8a;
		background: #fff;
	}

	.end {
		padding-left: 5px;
	}

	.times {
		position: relative;
		border-top: 1px solid #8a8a8a;
		border-bottom: 1px solid #8a8a8a;
		background: #fff;
	}

	.times span {
		position: absolute;
		height: 18px;
		border-left: 1px solid #8a8a8a;
	}

	.times b {
		padding-left: 2px;
		font-size: 13px;
	}

	.times strong {
		position: absolute;
		top: 0;
		box-sizing: border-box;
		width: 136px;
		border: 1px solid #000;
		background: #ffdf70;
		font-weight: normal;
		text-align: center;
		white-space: nowrap;
	}

	footer {
		display: flex;
		align-items: center;
		height: 20px;
		padding: 0 5px 0 3px;
		background: #f0f0f0;
	}

	.raised {
		width: 17px;
		height: 17px;
		padding: 1px;
		border: 1px solid;
		border-color: #fff #777 #777 #fff;
		background: #f0f0f0;
	}

	.track {
		flex: 1;
		display: flex;
		justify-content: flex-end;
		height: 17px;
		background: #f8f8f8;
	}

	.thumb {
		box-sizing: border-box;
		width: 62.500%;
		border: 1px solid;
		border-color: #fff #777 #777 #fff;
		background: #f0f0f0;
	}

	.speed {
		width: 70px;
		margin: 0 5px;
	}

	.speed input {
		display: block;
		appearance: none;
		width: 70px;
		height: 11px;
	}

	.speed input::-webkit-slider-runnable-track {
		height: 2px;
		background: #777;
	}

	.speed input::-webkit-slider-thumb {
		appearance: none;
		width: 4px;
		height: 10px;
		margin-top: -4px;
		border: 1px solid #777;
		background: #f0f0f0;
	}

	.speed i {
		display: block;
		height: 3px;
		background: repeating-linear-gradient(90deg, #000 0 1px, transparent 1px 7px);
	}

	.draw {
		display: flex;
		gap: 1px;
	}

	.draw button {
		width: 16px;
		height: 16px;
	}

	.draw path, .draw circle {
		stroke: #666;
	}

	.draw path:not([fill]), .draw circle {
		fill: none;
	}

	.draw .bold {
		stroke-width: 2;
	}

	.draw .pressed {
		background: #fff;
	}

	.draw .auto {
		color: #555;
		font: bold 16px/16px "Liberation Sans", sans-serif;
	}
</style>
